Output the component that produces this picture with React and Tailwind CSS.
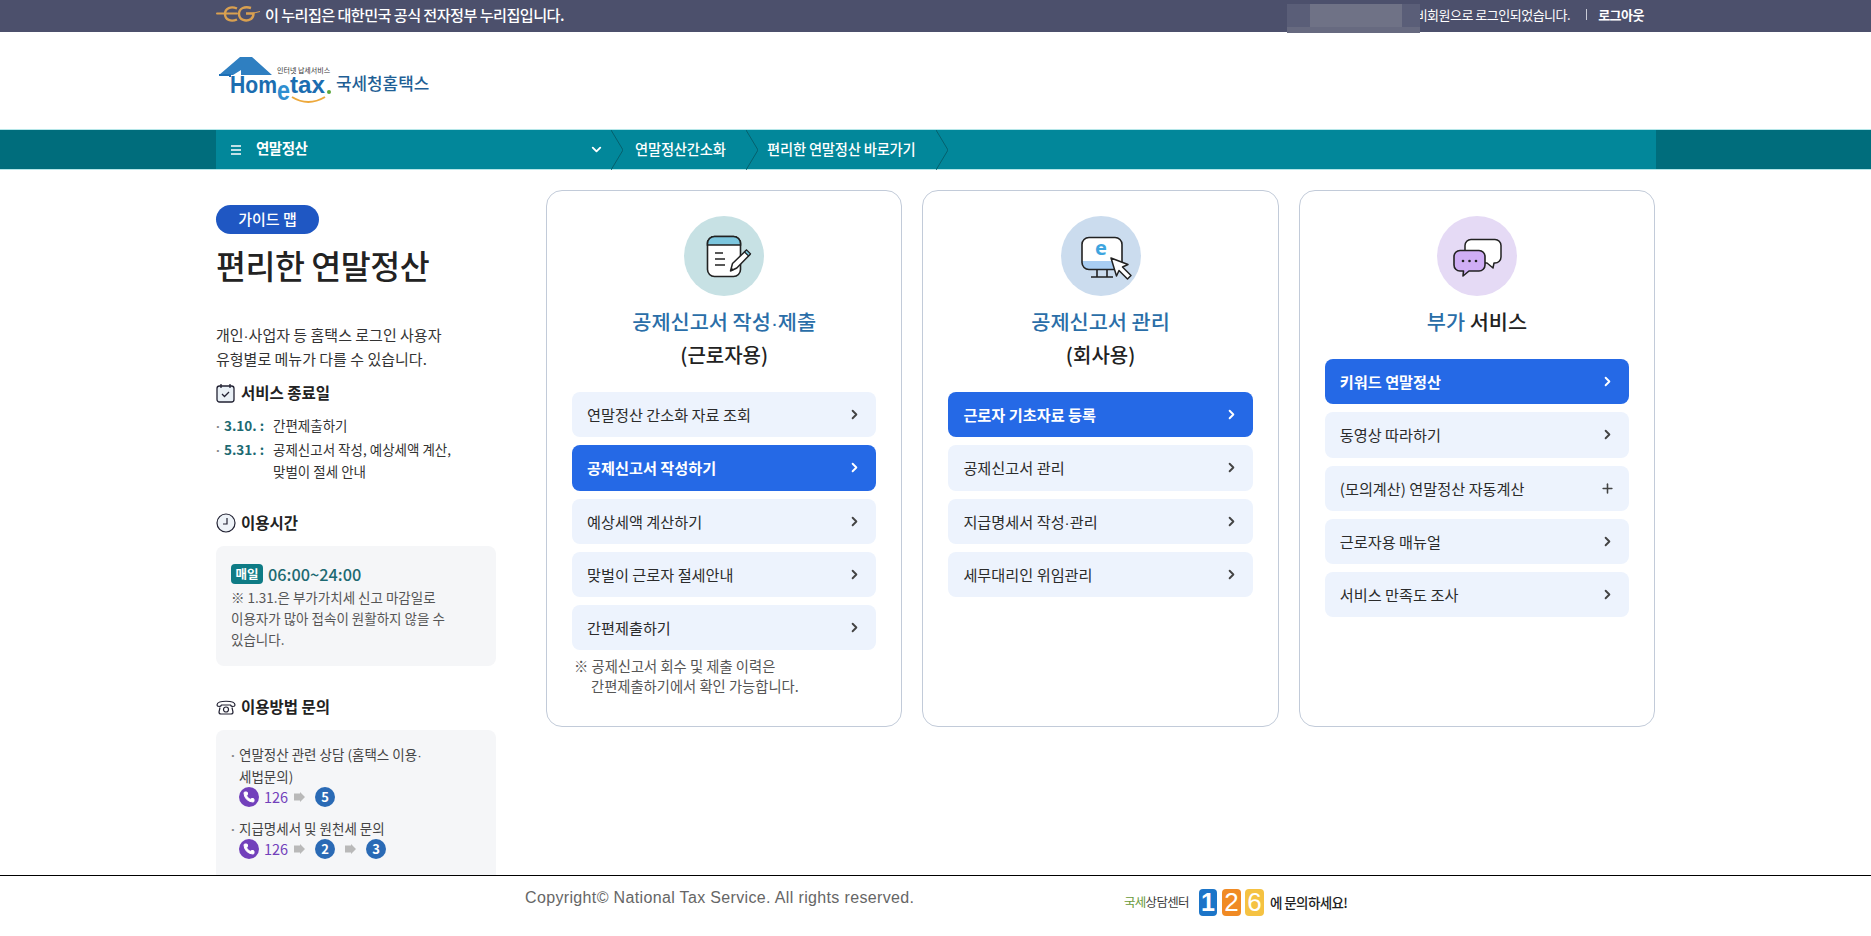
import { ChevronDown, ChevronRight, Plus, Phone } from "lucide-react";

const cjk = "font-['Noto_Sans_CJK_KR','Noto_Sans',sans-serif]";

// 가운뎃점은 CJK 글꼴에서 너무 넓게 나와서 따로 뺌
function Dot() {
  return <span className="font-['Liberation_Sans',sans-serif] leading-none">·</span>;
}

function Bullet() {
  return <span className="inline-block w-[8px] font-['Liberation_Sans',sans-serif] leading-none font-bold text-[#888]">·</span>;
}

function MenuButton({ label, active, plus }) {
  return (
    <a
      className={`flex h-[45.250px] items-center justify-between rounded-lg pr-[14px] pl-[15px] text-[15.200px] ${
        active ? "bg-[#2569e6] font-bold text-white" : "bg-[#edf3fd] text-[#2b2b2b]"
      }`}
    >
      <span>{label}</span>
      {plus ? (
        <Plus size={15} strokeWidth={2.5} className="text-[#444]" />
      ) : (
        <ChevronRight size={15} strokeWidth={3} className={active ? "text-white" : "text-[#444]"} />
      )}
    </a>
  );
}

function NoteIcon() {
  return (
    <svg width="80" height="80" viewBox="0 0 80 80" fill="none">
      <rect x="23.5" y="20.5" width="33" height="40" rx="7" fill="#fff" stroke="#222" strokeWidth="1.6" />
      <path d="M23.5 29v-1.500a7 7 0 0 1 7-7h19a7 7 0 0 1 7 7V29z" fill="#7cc6de" stroke="#222" strokeWidth="1.600" />
      <path d="M31 37h8M31 43h10M31 49h10" stroke="#222" strokeWidth="1.4" />
      <path d="M46.500 55l2-7.500L62 34.500l4 4L52.800 52z" fill="#fff" stroke="#222" strokeWidth="1.5" strokeLinejoin="round" />
      <path d="M60.500 36l4 4 2-2.200-4-4z" fill="#7cc6de" stroke="#222" strokeWidth="1.200" />
      <path d="M46.500 55l1-3.500 2.500 2.500z" fill="#222" />
    </svg>
  );
}

function MonitorIcon() {
  return (
    <svg width="80" height="80" viewBox="0 0 80 80" fill="none">
      <rect x="21" y="21.500" width="40" height="32" rx="7" fill="#fff" />
      <path d="M21 45h40v2a6.500 6.500 0 0 1-6.500 6.500h-27A6.500 6.500 0 0 1 21 47z" fill="#a9cdf2" />
      <rect x="21" y="21.500" width="40" height="32" rx="7" stroke="#222" strokeWidth="1.600" />
      <path d="M36 54v7M46 54v7M30 61h22" stroke="#222" strokeWidth="1.600" />
      <text x="40" y="39" textAnchor="middle" fontSize="20" fontWeight="700" fill="#3ea5df" fontFamily="'Noto Sans',sans-serif">e</text>
      <path d="M50 42l17 6.500-5.500 2.500 8.500 8.500-3.500 3.500-8.500-8.500-2.500 5.500z" fill="#fff" stroke="#222" strokeWidth="1.500" strokeLinejoin="round" />
    </svg>
  );
}

function ChatIcon() {
  return (
    <svg width="80" height="80" viewBox="0 0 80 80" fill="none">
      <path d="M34 23.500h24a6 6 0 0 1 6 6V41a6 6 0 0 1-6 6h-1l-1 5-6-5H34a6 6 0 0 1-6-6V29.500a6 6 0 0 1 6-6z" fill="#fff" stroke="#222" strokeWidth="1.500" strokeLinejoin="round" />
      <path d="M23 34.500h19a6 6 0 0 1 6 6V49a6 6 0 0 1-6 6H32l-6 5 .5-5H23a6 6 0 0 1-6-6v-8.500a6 6 0 0 1 6-6z" fill="#cfaef5" stroke="#222" strokeWidth="1.600" strokeLinejoin="round" />
      <circle cx="26" cy="45" r="1.300" fill="#222" />
      <circle cx="32.500" cy="45" r="1.300" fill="#222" />
      <circle cx="39" cy="45" r="1.300" fill="#222" />
    </svg>
  );
}

function Card({ icon, circle, title, sub, items, note }) {
  return (
    <section className="flex h-[537px] w-[356.400px] flex-col rounded-2xl border border-[#c2cbd9] px-[25px] pt-[25px]">
      <div className={`mx-auto h-20 w-20 rounded-full ${circle}`}>{icon}</div>
      <h3 className="mt-[10px] h-[34px] text-center text-[20.800px] leading-[30px] font-medium">{title}</h3>
      {sub && <p className="h-[34px] text-center text-[20px] leading-[30px] font-medium text-[#222]">{sub}</p>}
      <div className={`flex flex-col gap-2 ${sub ? "mt-[18px]" : "mt-[19px]"}`}>
        {items.map((item, i) => (
          <MenuButton key={i} {...item} />
        ))}
      </div>
      {note && (
        <p className="mt-[6px] pl-[2px] text-[14.300px] leading-[20px] text-[#555]">
          ※ 공제신고서 회수 및 제출 이력은
          <br />
          <span className="pl-[17px]">간편제출하기에서 확인 가능합니다.</span>
        </p>
      )}
    </section>
  );
}

function PhoneBadge() {
  return (
    <span className="flex h-5 w-5 items-center justify-center rounded-full bg-[#7240bb]">
      <Phone size={12} fill="#fff" stroke="#fff" />
    </span>
  );
}

function GrayArrow() {
  return (
    <svg width="11" height="10" viewBox="0 0 11 10" className="mx-[6px]">
      <path d="M0 1.500h6V0l5 5-5 5V8.500H0z" fill="#b9b9b9" />
    </svg>
  );
}

function Digit({ n }) {
  return (
    <span className="flex h-5 w-5 items-center justify-center rounded-full bg-[#2a6ab5] text-[13px] font-bold text-white">
      {n}
    </span>
  );
}

function Crumb({ children, className }) {
  return (
    <div className="flex h-full items-center">
      <svg width="12" height="40" viewBox="0 0 12 40" fill="none" className="shrink-0">
        <path d="M0 0l12 20L0 40" stroke="#06606d" strokeWidth="1" />
      </svg>
      <span className={`pb-[2px] text-[14.300px] font-medium tracking-[-0.2px] text-white ${className}`}>{children}</span>
    </div>
  );
}

export default function App() {
  return (
    <div className={`flex h-screen flex-col overflow-hidden bg-white text-[#222] ${cjk}`}>
      {/* 누리집 상단 */}
      <div className="relative h-8 shrink-0 bg-[#4c506c] text-white">
        <div className="ml-[216px] flex h-full w-[1428px] items-center justify-between pb-[3px]">
          <div className="flex items-center">
            <svg width="44" height="18" viewBox="0 0 44 18" fill="none" className="mr-[5px]">
              <path d="M1 8.500h20" stroke="#d9a050" strokeWidth="2" strokeLinecap="round" />
              <path d="M21 3.500C15 1 9 3 9 9s6 8 12 5.500" stroke="#d9a050" strokeWidth="2.400" />
              <path d="M35 3C29 1 23 3 23 9s7 8 12 5c2-1.500 2.500-3 2.500-5.500H30" stroke="#d9a050" strokeWidth="2.400" />
              <path d="M36 8.500l8-2" stroke="#d9a050" strokeWidth="1.200" />
            </svg>
            <span className="text-[15.200px] font-medium tracking-[-0.6px]">이 누리집은 대한민국 공식 전자정부 누리집입니다.</span>
          </div>
          <div className="flex items-center text-[13px] tracking-[-0.5px]">
            <span>비회원으로 로그인되었습니다.</span>
            <span className="mr-[11px] ml-[16px] h-[11px] w-px bg-[#c9cbd6]" />
            <span className="font-bold">로그아웃</span>
          </div>
        </div>
        {/* 사용자 이름 가림 */}
        <div className="absolute top-[4px] left-[1287px] h-[29px] w-[133px] bg-[#5a5e78]">
          <div className="ml-[23px] h-[23px] w-[92px] bg-[#6f7286]" />
          <div className="h-[6px] bg-[#676a80]" />
        </div>
      </div>

      {/* 로고 */}
      <header className="h-[97px] shrink-0 pl-[216px]">
        <svg width="220" height="97" viewBox="0 0 220 97">
          <path d="M3 43L24 25h12l20 18H25V38l-8 5z" fill="#2f7fc1" />
          <path d="M3 43h11v2" fill="none" stroke="#1c6fb6" strokeWidth="2" />
          <text x="14" y="61" fontSize="23" fontWeight="700" fill="#1b6db0" fontFamily="'Liberation Sans',sans-serif" textLength="47" lengthAdjust="spacingAndGlyphs">Hom</text>
          <text x="61" y="68" fontSize="27" fontWeight="700" fill="#2f8fd0" fontFamily="'Liberation Sans',sans-serif" textLength="13" lengthAdjust="spacingAndGlyphs">e</text>
          <text x="74" y="61" fontSize="23" fontWeight="700" fill="#1b6db0" fontFamily="'Liberation Sans',sans-serif" textLength="35" lengthAdjust="spacingAndGlyphs">tax</text>
          <circle cx="113" cy="60" r="2" fill="#5ba73c" />
          <path d="M76 65q16 10 33 0" fill="none" stroke="#eda83b" strokeWidth="2" />
          <text x="61" y="41" fontSize="7" fill="#333" fontFamily="'Noto Sans CJK KR',sans-serif">인터넷 납세서비스</text>
          <text x="120" y="58" fontSize="16.900" fontWeight="500" fill="#1f5f95" fontFamily="'Noto Sans CJK KR',sans-serif">국세청홈택스</text>
        </svg>
      </header>

      {/* 메뉴 바 */}
      <nav className="h-[41px] shrink-0 border-y border-[#b4e6e8] bg-[#006d7c]">
        <div className="ml-[216px] flex h-[39px] w-[1440px] items-center bg-[#02879a] text-white">
          <div className="flex h-full w-[395px] items-center pl-[15px]">
            <svg width="10" height="10" viewBox="0 0 10 10" className="mr-[15px]">
              <path d="M0 1h10M0 5h10M0 9h10" stroke="#fff" strokeWidth="1.500" />
            </svg>
            <span className="flex-1 pb-[3px] text-[14.500px] font-bold tracking-[-0.5px]">연말정산</span>
            <ChevronDown size={15} strokeWidth={3} className="mr-[7px]" />
          </div>
          <Crumb className="w-[123px] pl-3">연말정산간소화</Crumb>
          <Crumb className="w-[178px] pl-[9px]">편리한 연말정산 바로가기</Crumb>
          <svg width="12" height="40" viewBox="0 0 12 40" fill="none">
            <path d="M0 0l12 20L0 40" stroke="#06606d" strokeWidth="1" />
          </svg>
        </div>
      </nav>

      {/* 본문 */}
      <main className="min-h-0 flex-1 overflow-hidden">
        <div className="ml-[216px] flex w-[1440px]">
          <aside className="w-[280px] shrink-0 pt-[35px]">
            <span className="flex h-[29px] w-[103px] items-center justify-center rounded-full bg-[#1f57c3] text-[15px] font-medium text-white">
              가이드 맵
            </span>
            <h1 className="mt-[7px] text-[32.600px] leading-[48px] font-medium tracking-[-0.5px] text-[#222]">편리한 연말정산</h1>
            <p className="mt-[34px] text-[15px] leading-[24px] text-[#333]">
              개인<Dot />사업자 등 홈택스 로그인 사용자
              <br />
              유형별로 메뉴가 다를 수 있습니다.
            </p>
            <h2 className="mt-[10px] flex h-[24px] items-center gap-[6px] text-[15.500px] font-bold">
              <svg width="19" height="20" viewBox="0 0 19 20" fill="none">
                <rect x="1" y="3" width="17" height="16" rx="2.500" fill="#e9f0f6" stroke="#223" strokeWidth="1.300" />
                <path d="M5 1v4M14 1v4" stroke="#223" strokeWidth="1.300" />
                <path d="M6 11l2.500 2.500L13 9" stroke="#223" strokeWidth="1.300" />
              </svg>
              서비스 종료일
            </h2>
            <ul className="mt-[9px] text-[13.500px] leading-[22px] text-[#333]">
              <li className="flex">
                <span className="w-[57px] shrink-0 font-bold whitespace-pre text-[#1d6a72]"><Bullet />3.10. :</span>
                <span>간편제출하기</span>
              </li>
              <li className="mt-[2px] flex">
                <span className="w-[57px] shrink-0 font-bold whitespace-pre text-[#1d6a72]"><Bullet />5.31. :</span>
                <span>
                  공제신고서 작성, 예상세액 계산,
                  <br />
                  맞벌이 절세 안내
                </span>
              </li>
            </ul>
            <h2 className="mt-[29px] flex h-[24px] items-center gap-[5px] text-[15.500px] font-bold">
              <svg width="20" height="20" viewBox="0 0 20 20" fill="none">
                <circle cx="10" cy="10" r="9" fill="#eef3f8" stroke="#223" strokeWidth="1.200" />
                <path d="M11 5v6H7" stroke="#223" strokeWidth="1.200" />
              </svg>
              이용시간
            </h2>
            <div className="mt-[11px] h-[120px] rounded-lg bg-[#f5f6f8] px-[15px] pt-[18px]">
              <div className="flex h-[20px] items-center gap-[5px]">
                <span className="flex h-[20px] w-[32px] items-center justify-center rounded bg-[#0e7b85] text-[12.500px] font-bold text-white">매일</span>
                <span className="text-[16.300px] leading-[20px] font-medium text-[#1d6a72]">06:00~24:00</span>
              </div>
              <p className="mt-[3px] text-[13.500px] leading-[21px] text-[#555]">
                ※ 1.31.은 부가가치세 신고 마감일로
                <br />
                이용자가 많아 접속이 원활하지 않을 수
                <br />
                있습니다.
              </p>
            </div>
            <h2 className="mt-[29px] flex h-[24px] items-center gap-[5px] text-[15.500px] font-bold">
              <svg width="20" height="16" viewBox="0 0 20 16" fill="none">
                <path d="M1 6C1 1 19 1 19 6c0 2-4 2-4.500 0h-9C5 8 1 8 1 6z" stroke="#223" strokeWidth="1.200" />
                <path d="M4 8.500L3 13a2 2 0 0 0 2 2h10a2 2 0 0 0 2-2l-1-4.500" stroke="#223" strokeWidth="1.200" />
                <circle cx="10" cy="10.500" r="2.500" stroke="#223" strokeWidth="1.200" />
              </svg>
              이용방법 문의
            </h2>
            <div className="mt-[11px] h-[170px] rounded-lg bg-[#f5f6f8] px-[15px] pt-[13px] text-[13.500px] leading-[22px] text-[#444]">
              <p><Bullet />연말정산 관련 상담 (홈택스 이용<Dot /></p>
              <p className="pl-[8px]">세법문의)</p>
              <div className="flex h-[20px] items-center pl-[8px]">
                <PhoneBadge />
                <span className="ml-[5px] text-[14.500px] text-[#7240bb]">126</span>
                <GrayArrow />
                <span className="w-[4px]" />
                <Digit n="5" />
              </div>
              <p className="mt-[10px]"><Bullet />지급명세서 및 원천세 문의</p>
              <div className="flex h-[20px] items-center pl-[8px]">
                <PhoneBadge />
                <span className="ml-[5px] text-[14.500px] text-[#7240bb]">126</span>
                <GrayArrow />
                <span className="w-[4px]" />
                <Digit n="2" />
                <span className="w-[4px]" />
                <GrayArrow />
                <span className="w-[4px]" />
                <Digit n="3" />
              </div>
            </div>
          </aside>

          <div className="ml-[50px] flex gap-[20px] pt-[20px]">
            <Card
              circle="bg-[#c7e1e4]"
              icon={<NoteIcon />}
              title={<span className="text-[#2a6ea8]">공제신고서 작성<Dot />제출</span>}
              sub="(근로자용)"
              note
              items={[
                { label: "연말정산 간소화 자료 조회" },
                { label: "공제신고서 작성하기", active: true },
                { label: "예상세액 계산하기" },
                { label: "맞벌이 근로자 절세안내" },
                { label: "간편제출하기" },
              ]}
            />
            <Card
              circle="bg-[#cbdcee]"
              icon={<MonitorIcon />}
              title={<span className="text-[#2a6ea8]">공제신고서 관리</span>}
              sub="(회사용)"
              items={[
                { label: "근로자 기초자료 등록", active: true },
                { label: "공제신고서 관리" },
                { label: <>지급명세서 작성<Dot />관리</> },
                { label: "세무대리인 위임관리" },
              ]}
            />
            <Card
              circle="bg-[#e5daf5]"
              icon={<ChatIcon />}
              title={
                <>
                  <span className="text-[#2a6ea8]">부가</span> 서비스
                </>
              }
              items={[
                { label: "키워드 연말정산", active: true },
                { label: "동영상 따라하기" },
                { label: "(모의계산) 연말정산 자동계산", plus: true },
                { label: "근로자용 매뉴얼" },
                { label: "서비스 만족도 조사" },
              ]}
            />
          </div>
        </div>
      </main>

      {/* 푸터 */}
      <footer className="flex h-[61px] shrink-0 items-center border-t-[1.500px] border-black bg-white pb-[16px] pl-[525px]">
        <span className="w-[599px] font-['Liberation_Sans',sans-serif] text-[16px] tracking-[0.35px] text-[#666]">
          Copyright© National Tax Service. All rights reserved.
        </span>
        <span className="flex items-center pt-[8px]">
          <span className="w-[75px] text-[12.500px] tracking-[-0.7px] whitespace-nowrap text-[#3b3b3b]">
            <span className="text-[#6a9a3a]">국세</span>상담센터
          </span>
          <span className="flex h-[27px] w-[18px] items-center justify-center rounded-sm bg-[#1c75c8] font-['Liberation_Sans',sans-serif] text-[25px] leading-none font-bold text-white">1</span>
          <span className="ml-[5px] flex h-[27px] w-[19px] items-center justify-center rounded-sm bg-[#f08a24] font-['Liberation_Sans',sans-serif] text-[26px] leading-none text-white">2</span>
          <span className="ml-[4px] flex h-[27px] w-[19px] items-center justify-center rounded-sm bg-[#f5c242] font-['Liberation_Sans',sans-serif] text-[26px] leading-none text-white">6</span>
          <span className="ml-[6px] text-[13.500px] font-medium tracking-[-0.6px] text-[#222]">에 문의하세요!</span>
        </span>
      </footer>
    </div>
  );
}
